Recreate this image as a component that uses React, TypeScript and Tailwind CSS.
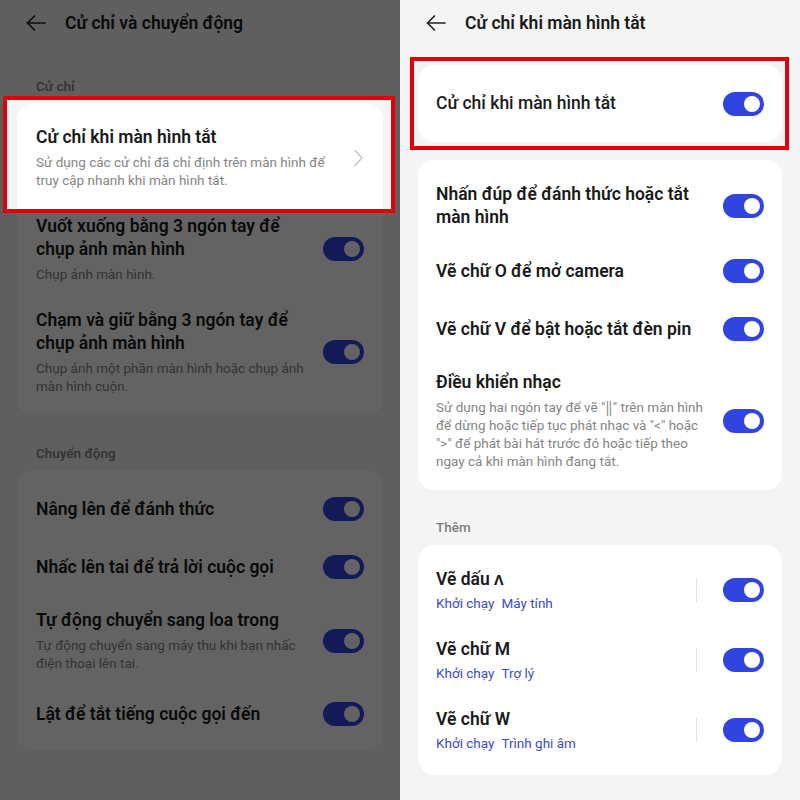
import React from "react";

const font = { fontFamily: "Roboto, 'Noto Sans', sans-serif" };

function BackArrow() {
  return (
    <svg width="20" height="20" viewBox="0 0 20 20" fill="none" stroke="#222" strokeWidth="1.7" strokeLinecap="round" strokeLinejoin="round">
      <path d="M19 10H1.5" />
      <path d="M8.5 3 1.5 10l7 7" />
    </svg>
  );
}

function Toggle() {
  return (
    <div className="flex h-[24px] w-[41px] shrink-0 items-center justify-end rounded-full bg-[#3044e0] pr-[4px]">
      <div className="h-[16px] w-[16px] rounded-full bg-white" />
    </div>
  );
}

function Header({ title }: { title: string }) {
  return (
    <div className="flex h-[46px] items-center pl-[26px]">
      <BackArrow />
      <span className="ml-[19px] text-[17.5px] font-semibold text-[#1a1a1a]">{title}</span>
    </div>
  );
}

function Label({ children, className }: { children: React.ReactNode; className: string }) {
  return <div className={"px-[36px] text-[13.5px] leading-[18px] font-medium text-[#808080] " + className}>{children}</div>;
}

type RowProps = { title: string[]; sub?: string[]; right?: React.ReactNode };

function Row({ title, sub, right }: RowProps) {
  const multi = title.length > 1 || !!sub;
  return (
    <div className={"flex items-center justify-between px-[19px] " + (multi ? "py-[13px]" : "min-h-[58px]")}>
      <div className="flex flex-col">
        {title.map((t) => (
          <div key={t} className="whitespace-nowrap text-[17.5px] leading-[23px] font-semibold text-[#1a1a1a]">{t}</div>
        ))}
        {sub && (
          <div className="mt-[4px] flex flex-col">
            {sub.map((s) => (
              <div key={s} className="whitespace-nowrap text-[13.5px] leading-[18px] text-[#858585]">{s}</div>
            ))}
          </div>
        )}
      </div>
      {right ?? <Toggle />}
    </div>
  );
}

function Chevron() {
  return (
    <svg width="9" height="18" viewBox="0 0 9 18" fill="none" stroke="#c2c2c2" strokeWidth="1.4" strokeLinecap="round" strokeLinejoin="round" className="mr-[1px]">
      <path d="M1 1.5 8 9l-7 7.5" />
    </svg>
  );
}

function LeftScreen() {
  return (
    <div className="relative h-full w-[400px] overflow-hidden bg-[#f4f4f4]">
      <Header title="Cử chỉ và chuyển động" />
      <Label className="mt-[31px]">Cử chỉ</Label>
      <div className="mx-[17px] mt-[8px] rounded-[16px] bg-white pt-[10px] pb-[7px]">
        <Row
          title={["Cử chỉ khi màn hình tắt"]}
          sub={["Sử dụng các cử chỉ đã chỉ định trên màn hình để", "truy cập nhanh khi màn hình tắt."]}
          right={<Chevron />}
        />
        <Row title={["Vuốt xuống bằng 3 ngón tay để", "chụp ảnh màn hình"]} sub={["Chụp ảnh màn hình."]} />
        <Row
          title={["Chạm và giữ bằng 3 ngón tay để", "chụp ảnh màn hình"]}
          sub={["Chụp ảnh một phần màn hình hoặc chụp ảnh", "màn hình cuộn."]}
        />
      </div>
      <Label className="mt-[29px]">Chuyển động</Label>
      <div className="mx-[17px] mt-[8px] rounded-[16px] bg-white pt-[10px] pb-[7px]">
        <Row title={["Nâng lên để đánh thức"]} />
        <Row title={["Nhấc lên tai để trả lời cuộc gọi"]} />
        <Row
          title={["Tự động chuyển sang loa trong"]}
          sub={["Tự động chuyển sang máy thu khi bạn nhấc", "điện thoại lên tai."]}
        />
        <Row title={["Lật để tắt tiếng cuộc gọi đến"]} />
      </div>
      <div className="absolute left-[3px] top-[96px] h-[117px] w-[392px] border-4 border-[#e3000b] shadow-[0_0_0_1200px_rgba(0,0,0,0.61)]" />
    </div>
  );
}

function ActionRow({ title, app }: { title: string; app: string }) {
  return (
    <div className="flex items-center justify-between px-[18px] py-[13px]">
      <div className="flex flex-col">
        <div className="text-[17.5px] leading-[23px] font-semibold text-[#1a1a1a]">{title}</div>
        <div className="mt-[3px] flex gap-[7px] text-[13.5px] leading-[18px] text-[#3b4cc9]">
          <span>Khởi chạy</span>
          <span>{app}</span>
        </div>
      </div>
      <div className="flex items-center">
        <div className="mr-[26px] h-[24px] w-px bg-[#e2e2e2]" />
        <Toggle />
      </div>
    </div>
  );
}

function RightScreen() {
  return (
    <div className="relative h-full w-[400px] bg-[#f4f4f4]">
      <Header title="Cử chỉ khi màn hình tắt" />
      <div className="mx-[18px] mt-[19px] flex h-[77px] items-center justify-between rounded-[16px] bg-white px-[18px]">
        <span className="text-[17.5px] font-medium text-[#1a1a1a]">Cử chỉ khi màn hình tắt</span>
        <Toggle />
      </div>
      <div className="mx-[18px] mt-[18px] rounded-[16px] bg-white pt-[10px] pb-[7px] [&>div]:px-[18px]">
        <Row title={["Nhấn đúp để đánh thức hoặc tắt", "màn hình"]} />
        <Row title={["Vẽ chữ O để mở camera"]} />
        <Row title={["Vẽ chữ V để bật hoặc tắt đèn pin"]} />
        <Row
          title={["Điều khiển nhạc"]}
          sub={[
            "Sử dụng hai ngón tay để vẽ \"‖\" trên màn hình",
            "để dừng hoặc tiếp tục phát nhạc và \"<\" hoặc",
            "\">\" để phát bài hát trước đó hoặc tiếp theo",
            "ngay cả khi màn hình đang tắt.",
          ]}
        />
      </div>
      <Label className="mt-[28px]">Thêm</Label>
      <div className="mx-[18px] mt-[9px] rounded-[16px] bg-white py-[10px]">
        <ActionRow title="Vẽ dấu ʌ" app="Máy tính" />
        <ActionRow title="Vẽ chữ M" app="Trợ lý" />
        <ActionRow title="Vẽ chữ W" app="Trình ghi âm" />
      </div>
      <div className="absolute left-[10px] top-[57px] h-[93px] w-[379px] border-4 border-[#e3000b]" />
    </div>
  );
}

export default function App() {
  return (
    <div className="flex h-[800px] w-[800px] overflow-hidden" style={font}>
      <LeftScreen />
      <RightScreen />
    </div>
  );
}
